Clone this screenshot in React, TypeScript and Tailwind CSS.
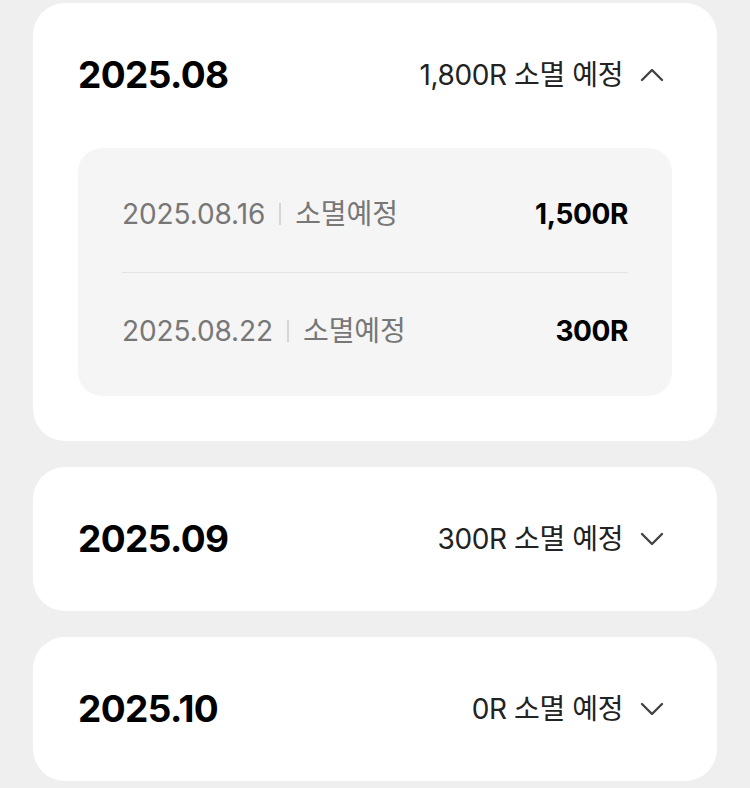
import { useState } from 'react'

interface Item {
  date: string
  amount: string
}

interface Month {
  month: string
  total: string
  items: Item[]
}

const months: Month[] = [
  {
    month: '2025.08',
    total: '1,800R',
    items: [
      { date: '2025.08.16', amount: '1,500R' },
      { date: '2025.08.22', amount: '300R' },
    ],
  },
  { month: '2025.09', total: '300R', items: [] },
  { month: '2025.10', total: '0R', items: [] },
]

function Chevron({ up }: { up: boolean }) {
  return (
    <svg width="24" height="24" viewBox="0 0 24 24" fill="none" className="shrink-0">
      <path
        d={up ? 'M2 17 L12 7 L22 17' : 'M2 7 L12 17 L22 7'}
        stroke="#444"
        strokeWidth="2.4"
        strokeLinecap="round"
        strokeLinejoin="round"
      />
    </svg>
  )
}

export default function App() {
  const [open, setOpen] = useState<string | null>('2025.08')

  return (
    <div
      className="min-h-screen bg-[#efefef] px-[33px] pt-[3px] flex flex-col gap-[26px]"
      style={{ fontFamily: 'Inter, "Noto Sans CJK KR", sans-serif' }}
    >
      {months.map(m => {
        const isOpen = open === m.month
        return (
          <div key={m.month} className="bg-white rounded-[32px] px-[45px] py-[45px]">
            <button
              onClick={() => setOpen(isOpen ? null : m.month)}
              className="w-full h-[54px] flex items-center justify-between"
            >
              <span className="text-[37px] font-bold text-black tracking-[-0.6px]">{m.month}</span>
              <span className="flex items-center gap-[17px] pr-[8px]">
                <span className="text-[28px] text-[#222] tracking-[-0.4px]">{m.total} 소멸 예정</span>
                <Chevron up={isOpen} />
              </span>
            </button>

            {isOpen && m.items.length > 0 && (
              <div className="mt-[46px] bg-[#f5f5f5] rounded-[24px] px-[44px] pt-[8px] pb-[7px]">
                {m.items.map((it, i) => (
                  <div key={it.date}>
                    {i > 0 && <div className="h-px bg-[#e3e3e3]" />}
                    <div className="h-[116px] flex items-center justify-between">
                      <div className="flex items-center text-[28px] text-[#777] tracking-[-0.1px]">
                        <span>{it.date}</span>
                        <span className="mx-[14px] w-[2px] h-[22px] bg-[#d6d6d6]" />
                        <span>소멸예정</span>
                      </div>
                      <span className="text-[28px] font-bold text-black tracking-[-0.4px]">{it.amount}</span>
                    </div>
                  </div>
                ))}
              </div>
            )}
          </div>
        )
      })}
    </div>
  )
}
